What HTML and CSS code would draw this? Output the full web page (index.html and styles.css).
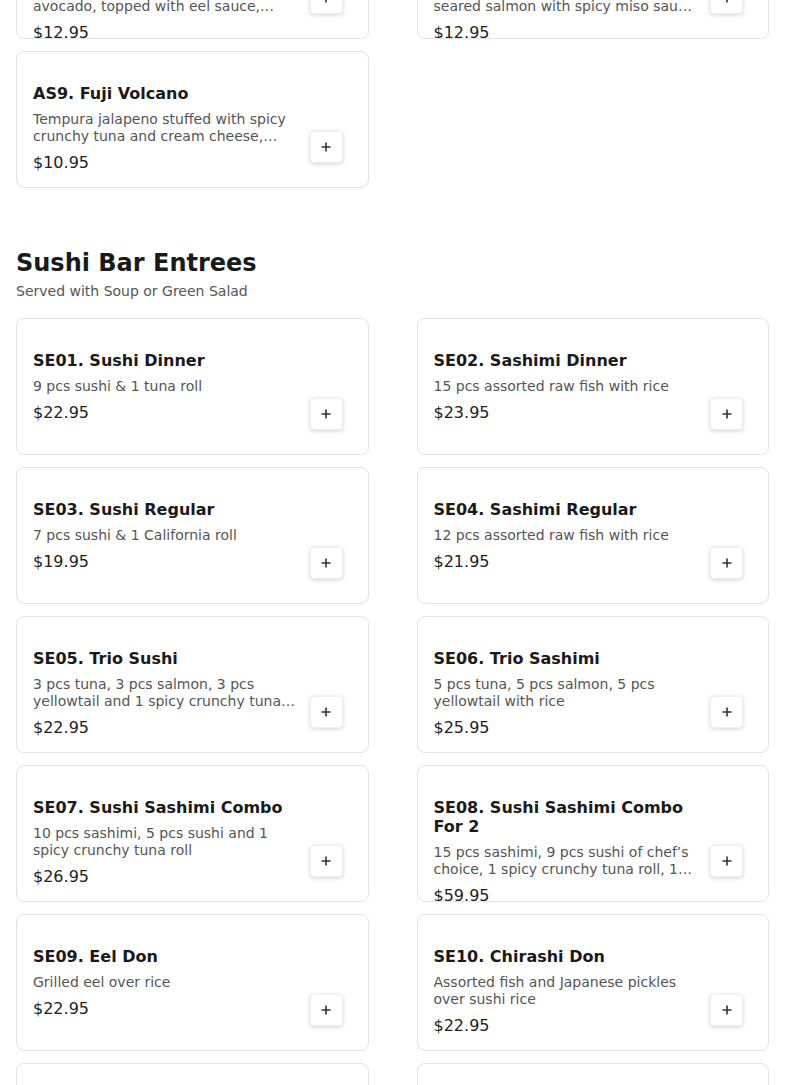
FILE: index.html
```html
<!DOCTYPE html>
<html lang="en">
<head>
<meta charset="utf-8">
<title>Menu</title>
<link rel="stylesheet" href="styles.css">
</head>
<body>
<main class="page">
  <section class="section section-prev">
    <div class="grid">
      <div class="card">
        <div class="info">
          <h3 class="title">AS7. Golden Dragon Special Signature Roll</h3>
          <p class="desc">Shrimp tempura and cucumber, eel, avocado, topped with eel sauce, spicy mayo and tobiko</p>
          <div class="price">$12.95</div>
        </div>
        <button class="add" type="button" aria-label="Add"><svg viewBox="0 0 10 10" width="10" height="10"><path d="M5 0.5V9.5M0.5 5H9.5" stroke="#333" stroke-width="1.6" fill="none"/></svg></button>
      </div>
      <div class="card">
        <div class="info">
          <h3 class="title">AS8. Salmon Lover Miso Special Signature Roll</h3>
          <p class="desc">Spicy tuna and cucumber inside, seared salmon with spicy miso sauce and scallions</p>
          <div class="price">$12.95</div>
        </div>
        <button class="add" type="button" aria-label="Add"><svg viewBox="0 0 10 10" width="10" height="10"><path d="M5 0.5V9.5M0.5 5H9.5" stroke="#333" stroke-width="1.6" fill="none"/></svg></button>
      </div>
      <div class="card">
        <div class="info">
          <h3 class="title">AS9. Fuji Volcano</h3>
          <p class="desc">Tempura jalapeno stuffed with spicy crunchy tuna and cream cheese, topped with spicy mayo and eel sauce</p>
          <div class="price">$10.95</div>
        </div>
        <button class="add" type="button" aria-label="Add"><svg viewBox="0 0 10 10" width="10" height="10"><path d="M5 0.5V9.5M0.5 5H9.5" stroke="#333" stroke-width="1.6" fill="none"/></svg></button>
      </div>
    </div>
  </section>

  <section class="section">
    <h2 class="section-title">Sushi Bar Entrees</h2>
    <p class="section-sub">Served with Soup or Green Salad</p>
    <div class="grid">
      <div class="card">
        <div class="info">
          <h3 class="title">SE01. Sushi Dinner</h3>
          <p class="desc">9 pcs sushi &amp; 1 tuna roll</p>
          <div class="price">$22.95</div>
        </div>
        <button class="add" type="button" aria-label="Add"><svg viewBox="0 0 10 10" width="10" height="10"><path d="M5 0.5V9.5M0.5 5H9.5" stroke="#333" stroke-width="1.6" fill="none"/></svg></button>
      </div>
      <div class="card">
        <div class="info">
          <h3 class="title">SE02. Sashimi Dinner</h3>
          <p class="desc">15 pcs assorted raw fish with rice</p>
          <div class="price">$23.95</div>
        </div>
        <button class="add" type="button" aria-label="Add"><svg viewBox="0 0 10 10" width="10" height="10"><path d="M5 0.5V9.5M0.5 5H9.5" stroke="#333" stroke-width="1.6" fill="none"/></svg></button>
      </div>
      <div class="card">
        <div class="info">
          <h3 class="title">SE03. Sushi Regular</h3>
          <p class="desc">7 pcs sushi &amp; 1 California roll</p>
          <div class="price">$19.95</div>
        </div>
        <button class="add" type="button" aria-label="Add"><svg viewBox="0 0 10 10" width="10" height="10"><path d="M5 0.5V9.5M0.5 5H9.5" stroke="#333" stroke-width="1.6" fill="none"/></svg></button>
      </div>
      <div class="card">
        <div class="info">
          <h3 class="title">SE04. Sashimi Regular</h3>
          <p class="desc">12 pcs assorted raw fish with rice</p>
          <div class="price">$21.95</div>
        </div>
        <button class="add" type="button" aria-label="Add"><svg viewBox="0 0 10 10" width="10" height="10"><path d="M5 0.5V9.5M0.5 5H9.5" stroke="#333" stroke-width="1.6" fill="none"/></svg></button>
      </div>
      <div class="card">
        <div class="info">
          <h3 class="title">SE05. Trio Sushi</h3>
          <p class="desc">3 pcs tuna, 3 pcs salmon, 3 pcs yellowtail and 1 spicy crunchy tuna roll</p>
          <div class="price">$22.95</div>
        </div>
        <button class="add" type="button" aria-label="Add"><svg viewBox="0 0 10 10" width="10" height="10"><path d="M5 0.5V9.5M0.5 5H9.5" stroke="#333" stroke-width="1.6" fill="none"/></svg></button>
      </div>
      <div class="card">
        <div class="info">
          <h3 class="title">SE06. Trio Sashimi</h3>
          <p class="desc">5 pcs tuna, 5 pcs salmon, 5 pcs yellowtail with rice</p>
          <div class="price">$25.95</div>
        </div>
        <button class="add" type="button" aria-label="Add"><svg viewBox="0 0 10 10" width="10" height="10"><path d="M5 0.5V9.5M0.5 5H9.5" stroke="#333" stroke-width="1.6" fill="none"/></svg></button>
      </div>
      <div class="card">
        <div class="info">
          <h3 class="title">SE07. Sushi Sashimi Combo</h3>
          <p class="desc">10 pcs sashimi, 5 pcs sushi and 1 spicy crunchy tuna roll</p>
          <div class="price">$26.95</div>
        </div>
        <button class="add" type="button" aria-label="Add"><svg viewBox="0 0 10 10" width="10" height="10"><path d="M5 0.5V9.5M0.5 5H9.5" stroke="#333" stroke-width="1.6" fill="none"/></svg></button>
      </div>
      <div class="card">
        <div class="info">
          <h3 class="title">SE08. Sushi Sashimi Combo For 2</h3>
          <p class="desc">15 pcs sashimi, 9 pcs sushi of chef’s choice, 1 spicy crunchy tuna roll, 1 rainbow roll</p>
          <div class="price">$59.95</div>
        </div>
        <button class="add" type="button" aria-label="Add"><svg viewBox="0 0 10 10" width="10" height="10"><path d="M5 0.5V9.5M0.5 5H9.5" stroke="#333" stroke-width="1.6" fill="none"/></svg></button>
      </div>
      <div class="card">
        <div class="info">
          <h3 class="title">SE09. Eel Don</h3>
          <p class="desc">Grilled eel over rice</p>
          <div class="price">$22.95</div>
        </div>
        <button class="add" type="button" aria-label="Add"><svg viewBox="0 0 10 10" width="10" height="10"><path d="M5 0.5V9.5M0.5 5H9.5" stroke="#333" stroke-width="1.6" fill="none"/></svg></button>
      </div>
      <div class="card">
        <div class="info">
          <h3 class="title">SE10. Chirashi Don</h3>
          <p class="desc">Assorted fish and Japanese pickles over sushi rice</p>
          <div class="price">$22.95</div>
        </div>
        <button class="add" type="button" aria-label="Add"><svg viewBox="0 0 10 10" width="10" height="10"><path d="M5 0.5V9.5M0.5 5H9.5" stroke="#333" stroke-width="1.6" fill="none"/></svg></button>
      </div>
      <div class="card">
        <div class="info">
          <h3 class="title">SE11. Tekka Don</h3>
          <p class="desc">Tuna sashimi over sushi rice</p>
          <div class="price">$23.95</div>
        </div>
        <button class="add" type="button" aria-label="Add"><svg viewBox="0 0 10 10" width="10" height="10"><path d="M5 0.5V9.5M0.5 5H9.5" stroke="#333" stroke-width="1.6" fill="none"/></svg></button>
      </div>
      <div class="card">
        <div class="info">
          <h3 class="title">SE12. Sake Don</h3>
          <p class="desc">Salmon sashimi over sushi rice</p>
          <div class="price">$22.95</div>
        </div>
        <button class="add" type="button" aria-label="Add"><svg viewBox="0 0 10 10" width="10" height="10"><path d="M5 0.5V9.5M0.5 5H9.5" stroke="#333" stroke-width="1.6" fill="none"/></svg></button>
      </div>
    </div>
  </section>
</main>
</body>
</html>
```

FILE: styles.css
```css
html, body {
  margin: 0;
  padding: 0;
  background: #ffffff;
}

body {
  font-family: "DejaVu Sans", "Noto Sans", sans-serif;
  color: #1a1a1a;
  overflow: hidden;
}

.page {
  padding: 0 16px;
}

.section-prev {
  margin-top: -98px;
}

.section {
  margin-bottom: 60px;
}

.section-title {
  margin: 0;
  font-size: 24px;
  font-weight: bold;
  line-height: 30px;
  color: #1a1a1a;
}

.section-sub {
  margin: 5px 0 0;
  font-size: 14px;
  line-height: 17px;
  color: #555555;
}

.section-sub + .grid {
  margin-top: 18px;
}

.grid {
  display: grid;
  grid-template-columns: 1fr 1fr;
  column-gap: 48px;
  row-gap: 12px;
}

.card {
  box-sizing: border-box;
  height: 137px;
  border: 1px solid #e3e3e3;
  border-radius: 8px;
  padding: 32px 25px 0 16px;
  display: flex;
  align-items: flex-start;
  gap: 14px;
  overflow: hidden;
  background: #fff;
}

.info {
  flex: 1;
  min-width: 0;
}

.title {
  margin: 0;
  font-size: 16px;
  font-weight: bold;
  line-height: 1.2;
  color: #1a1a1a;
}

.desc {
  margin: 8px 0 0;
  font-size: 14px;
  line-height: 1.2;
  color: #555555;
  display: -webkit-box;
  -webkit-line-clamp: 2;
  -webkit-box-orient: vertical;
  overflow: hidden;
}

.price {
  margin-top: 8px;
  font-size: 16px;
  line-height: 1.2;
  color: #222222;
}

.add {
  flex: none;
  width: 33px;
  height: 32px;
  margin-top: 47px;
  padding: 0;
  border: 1px solid #efefef;
  border-radius: 4px;
  background: #fff;
  box-shadow: 0 1px 4px rgba(0, 0, 0, 0.18);
  display: flex;
  align-items: center;
  justify-content: center;
  cursor: pointer;
}

.add svg {
  display: block;
}
```
